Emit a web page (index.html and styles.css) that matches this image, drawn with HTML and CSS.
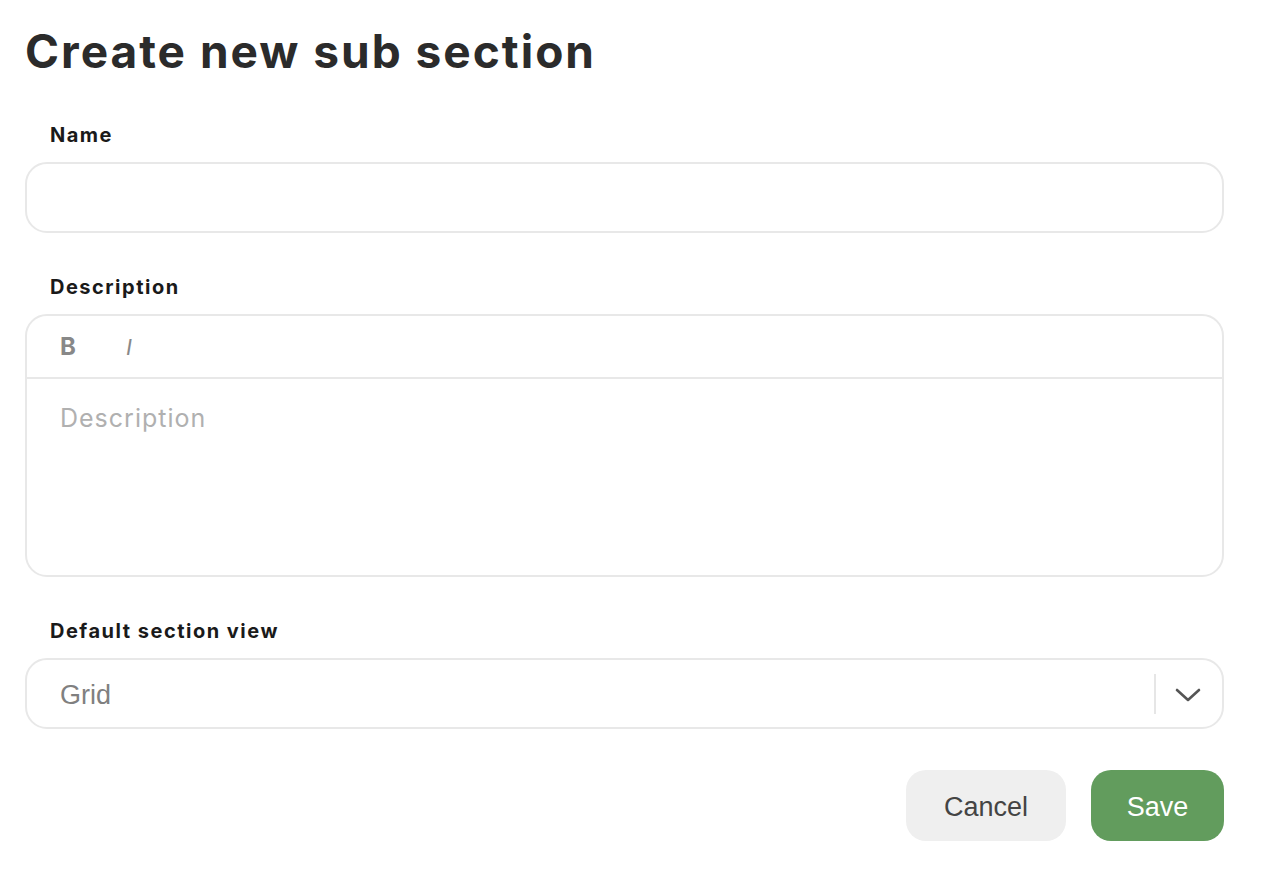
FILE: index.html
```html
<!DOCTYPE html>
<html lang="en">
<head>
<meta charset="utf-8">
<title>Create new sub section</title>
<link rel="stylesheet" href="styles.css">
</head>
<body>
<main class="page">
  <h1 class="title">Create new sub section</h1>

  <div class="field">
    <label class="label">Name</label>
    <div class="input"></div>
  </div>

  <div class="field">
    <label class="label">Description</label>
    <div class="editor">
      <div class="toolbar">
        <span class="tb-bold">B</span>
        <span class="tb-italic">I</span>
      </div>
      <div class="editor-body">
        <span class="placeholder">Description</span>
      </div>
    </div>
  </div>

  <div class="field">
    <label class="label">Default section view</label>
    <div class="select">
      <span class="select-value">Grid</span>
      <span class="select-sep"></span>
      <svg class="chevron" width="26" height="16" viewBox="0 0 26 16" aria-hidden="true">
        <path d="M2 3 L13 13 L24 3" fill="none" stroke="#555" stroke-width="2.6" stroke-linecap="round" stroke-linejoin="round"/>
      </svg>
    </div>
  </div>

  <div class="actions">
    <button class="btn btn-cancel">Cancel</button>
    <button class="btn btn-save">Save</button>
  </div>
</main>
</body>
</html>
```

FILE: styles.css
```css
* { box-sizing: border-box; }

body {
  margin: 0;
  background: #ffffff;
  font-family: "Inter", "Noto Sans", sans-serif;
  color: #1c1c1c;
}

.page {
  padding: 24px 38px 0 25px;
}

.title {
  margin: 0 0 46px 0;
  font-size: 46px;
  line-height: 54px;
  font-weight: 700;
  color: #2b2b2b;
  letter-spacing: 2px;
}

.field {
  margin-bottom: 43px;
}

.label {
  display: block;
  padding-left: 25px;
  font-size: 20px;
  line-height: 22px;
  font-weight: 700;
  color: #1a1a1a;
  letter-spacing: 1.5px;
  margin-bottom: 16px;
}

.input {
  height: 71px;
  border: 2px solid #e8e8e8;
  border-radius: 22px;
}

.editor {
  border: 2px solid #e8e8e8;
  border-radius: 22px;
  height: 263px;
  display: flex;
  flex-direction: column;
}

.toolbar {
  height: 63px;
  border-bottom: 2px solid #e8e8e8;
  display: flex;
  align-items: center;
  padding-left: 33px;
  gap: 50px;
  color: #888888;
  font-size: 24px;
}

.tb-bold {
  font-weight: 700;
}

.tb-italic {
  font-style: italic;
  font-weight: 400;
  font-size: 22px;
}

.editor-body {
  flex: 1;
  padding: 23px 33px;
}

.placeholder {
  font-size: 25px;
  line-height: 32px;
  color: #b0b0b0;
  letter-spacing: 1px;
}

.select {
  height: 71px;
  border: 2px solid #e8e8e8;
  border-radius: 22px;
  display: flex;
  align-items: center;
  padding: 0 21px 0 33px;
}

.select-value {
  flex: 1;
  font-family: "Liberation Sans", Arial, sans-serif;
  font-size: 27px;
  color: #808080;
  padding-top: 3px;
}

.select-sep {
  width: 2px;
  height: 40px;
  background: #e6e6e6;
  margin-right: 19px;
}

.chevron {
  display: block;
  margin-top: 2px;
}

.actions {
  display: flex;
  justify-content: flex-end;
  gap: 25px;
  margin-top: -2px;
}

.btn {
  height: 71px;
  border: none;
  border-radius: 20px;
  font-family: "Liberation Sans", Arial, sans-serif;
  font-size: 27px;
  padding: 3px 0 0 0;
  text-align: center;
  cursor: pointer;
}

.btn-cancel {
  width: 160px;
  background: #efefef;
  color: #444444;
}

.btn-save {
  width: 133px;
  background: #629c5d;
  color: #ffffff;
}
```
